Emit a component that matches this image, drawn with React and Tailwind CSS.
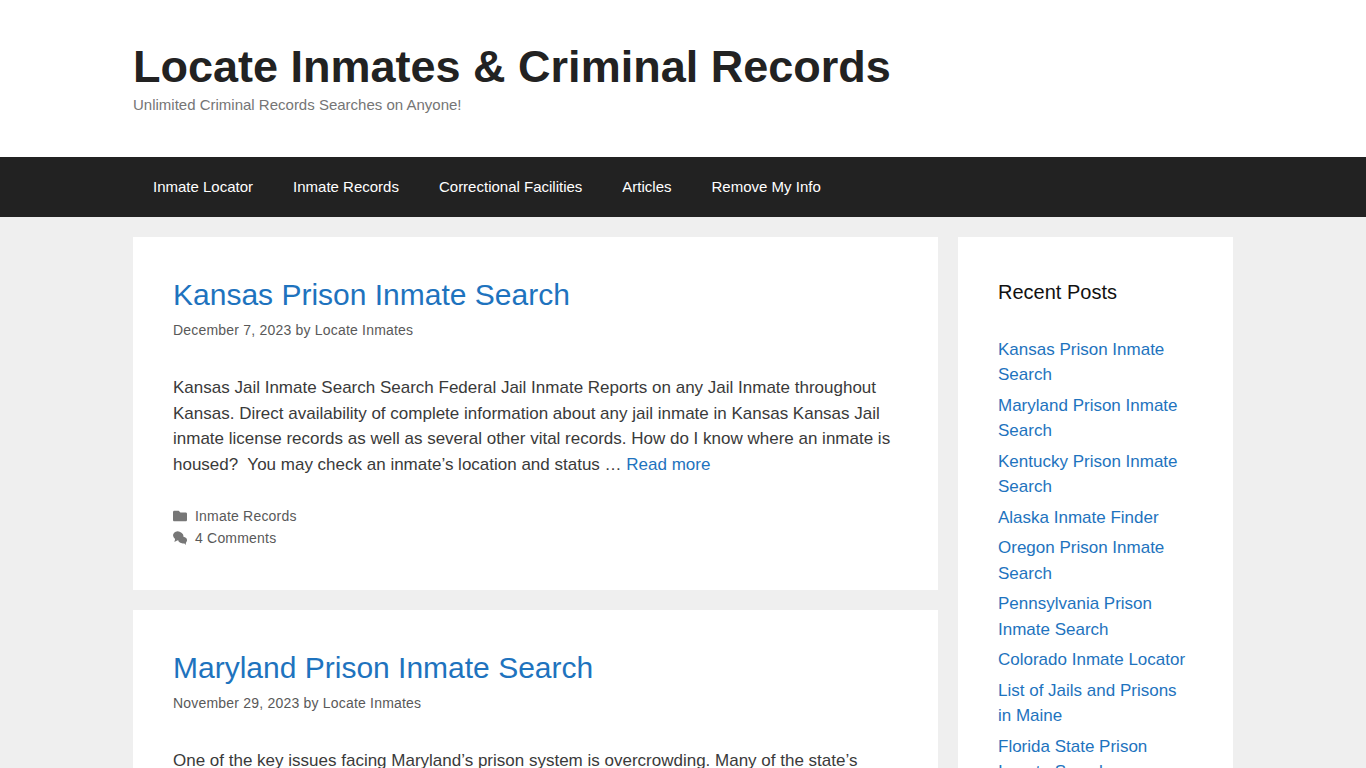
const recentPosts = [
  "Kansas Prison Inmate Search",
  "Maryland Prison Inmate Search",
  "Kentucky Prison Inmate Search",
  "Alaska Inmate Finder",
  "Oregon Prison Inmate Search",
  "Pennsylvania Prison Inmate Search",
  "Colorado Inmate Locator",
  "List of Jails and Prisons in Maine",
  "Florida State Prison Inmate Search",
];

const navItems = ["Inmate Locator", "Inmate Records", "Correctional Facilities", "Articles", "Remove My Info"];

function FolderIcon() {
  return (
    <svg viewBox="0 0 512 512" className="w-[14px] h-[14px] fill-[#777]">
      <path d="M464 128H272l-64-64H48C21.49 64 0 85.49 0 112v288c0 26.51 21.49 48 48 48h416c26.51 0 48-21.49 48-48V176c0-26.51-21.49-48-48-48z" />
    </svg>
  );
}

function CommentsIcon() {
  return (
    <svg viewBox="0 0 16 16" className="w-[14px] h-[14px] fill-[#777]">
      <ellipse cx="6" cy="5.500" rx="6" ry="5" transform="rotate(18 6 5.500)" />
      <path d="M2.500 8.500 1.600 12.600 5.800 10.200z" />
      <ellipse cx="11" cy="10.400" rx="5" ry="3.800" transform="rotate(12 11 10.400)" />
      <path d="M12 13 14.800 16 14.400 11.500z" />
    </svg>
  );
}

function Article({ title, date, children, footer }) {
  return (
    <article className="bg-white px-10 pt-10 pb-[41px] mb-5">
      <h2 className="text-[30px] leading-[36px] text-[#1e73be]">{title}</h2>
      <div className="mt-[5px] text-[14px] leading-[24px] text-[#595959] tracking-[0.2px]">
        {date} by Locate Inmates
      </div>
      <p className="mt-[33px] text-[17px] leading-[25.5px] text-[#3a3a3a]">{children}</p>
      {footer && (
        <div className="mt-[28px] text-[14px] leading-[22px] text-[#595959] tracking-[0.2px]">
          <div className="flex items-center gap-2"><FolderIcon /> Inmate Records</div>
          <div className="flex items-center gap-2"><CommentsIcon /> 4 Comments</div>
        </div>
      )}
    </article>
  );
}

export default function App() {
  return (
    <div className="h-[768px] overflow-hidden bg-[#efefef] font-['Liberation_Sans',Arial,sans-serif]">
      <header className="bg-white h-[157px]">
        <div className="w-[1100px] mx-auto pt-[40px]">
          <h1 className="text-[45px] leading-[54px] font-bold text-[#222]">Locate Inmates &amp; Criminal Records</h1>
          <p className="text-[15px] leading-[22px] text-[#757575]">Unlimited Criminal Records Searches on Anyone!</p>
        </div>
      </header>
      <nav className="bg-[#222] h-[60px]">
        <ul className="w-[1100px] mx-auto flex">
          {navItems.map((item) => (
            <li key={item} className="px-5 text-[15px] leading-[60px] text-white">{item}</li>
          ))}
        </ul>
      </nav>
      <div className="w-[1100px] mx-auto mt-5 flex gap-5 items-start">
        <main className="w-[805px] shrink-0">
          <Article title="Kansas Prison Inmate Search" date="December 7, 2023" footer>
            Kansas Jail Inmate Search Search Federal Jail Inmate Reports on any Jail Inmate throughout Kansas. Direct availability of complete information about any jail inmate in Kansas Kansas Jail inmate license records as well as several other vital records. How do I know where an inmate is housed?&nbsp; You may check an inmate’s location and status …{" "}
            <span className="text-[#1e73be]">Read more</span>
          </Article>
          <Article title="Maryland Prison Inmate Search" date="November 29, 2023">
            One of the key issues facing Maryland’s prison system is overcrowding. Many of the state’s
          </Article>
        </main>
        <aside className="w-[275px] shrink-0 bg-white p-10">
          <h2 className="text-[20px] leading-[30px] text-[#111]">Recent Posts</h2>
          <ul className="mt-[29.6px] text-[17px] leading-[25.5px] text-[#1e73be]">
            {recentPosts.map((post) => (
              <li key={post} className="mb-[5px]">{post}</li>
            ))}
          </ul>
        </aside>
      </div>
    </div>
  );
}
